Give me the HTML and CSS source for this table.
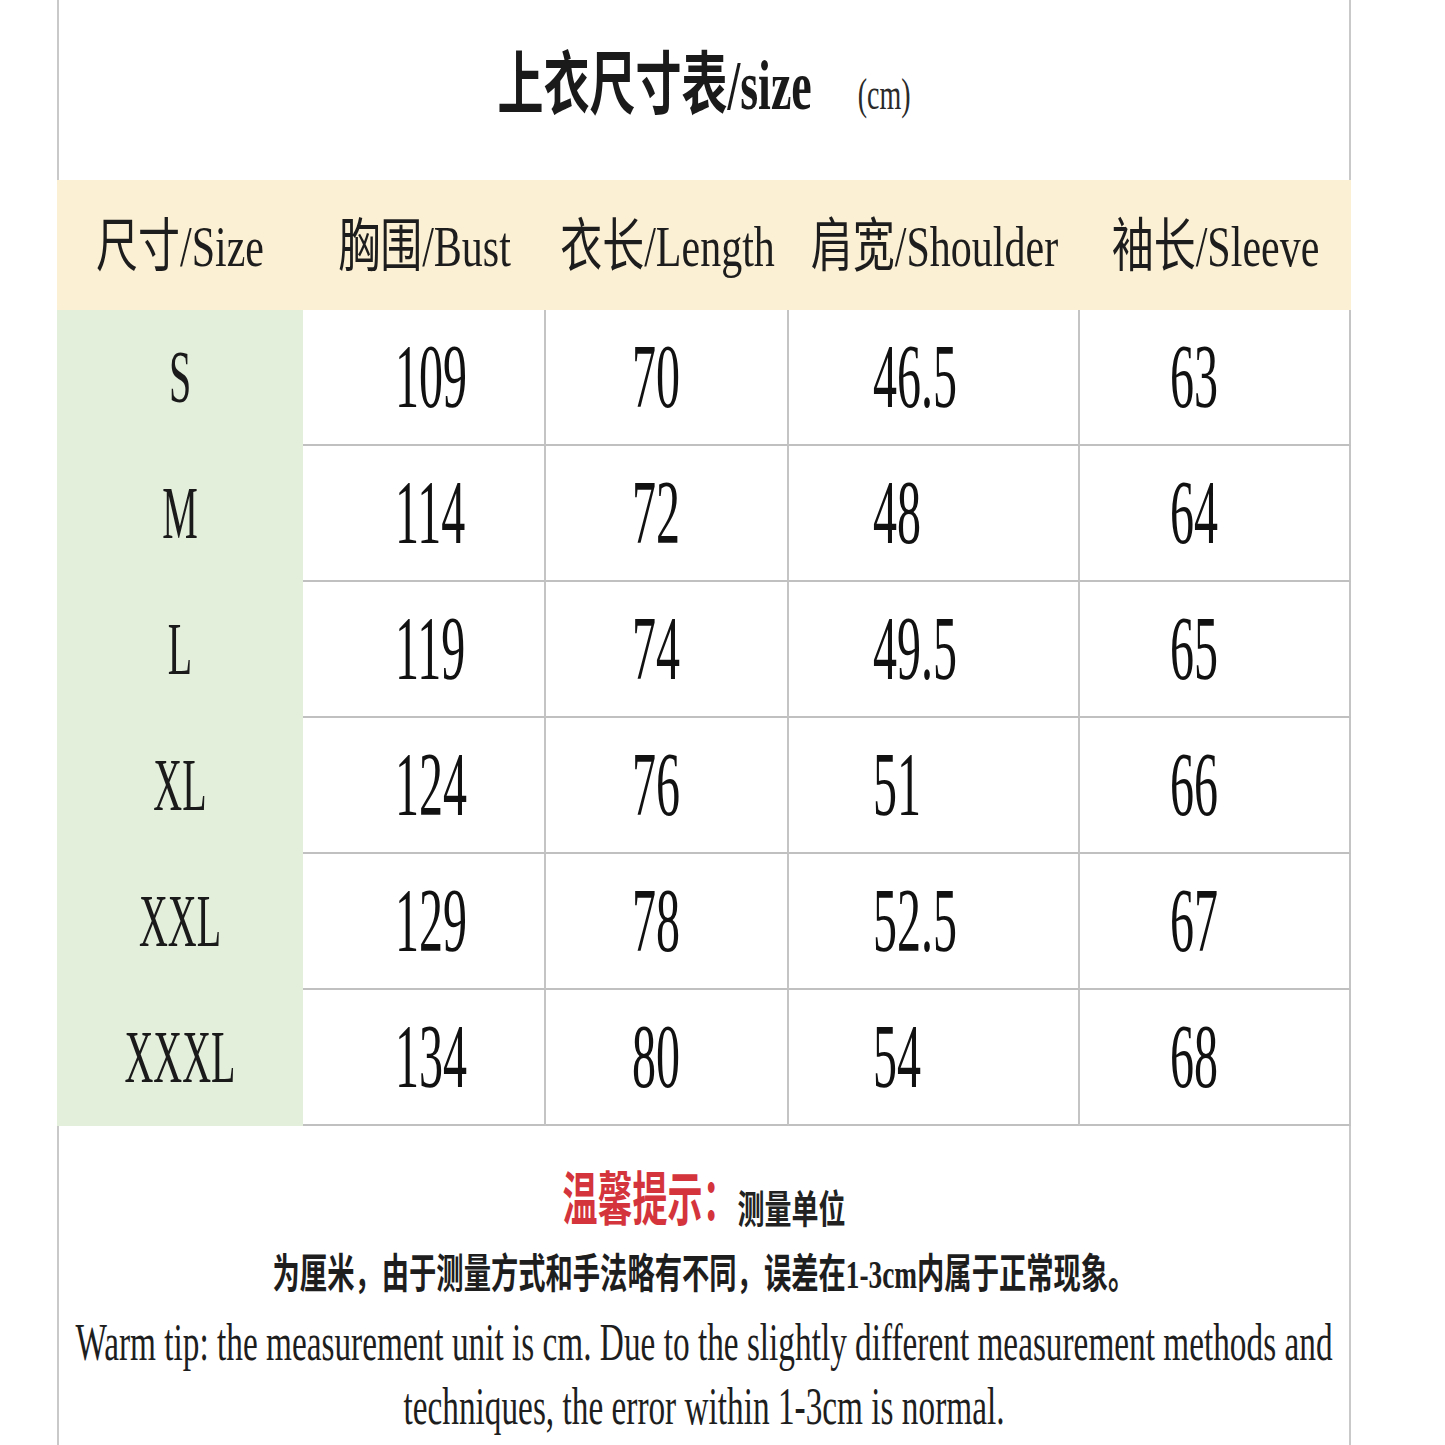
FILE: index.html
```html
<!DOCTYPE html>
<html lang="zh-CN">
<head>
<meta charset="utf-8">
<title>上衣尺寸表</title>
<link rel="stylesheet" href="styles.css">
</head>
<body>
<div class="page">
  <header class="title-box">
    <h1 class="t-main">上衣尺寸表/size</h1>
    <span class="t-unit">(cm)</span>
  </header>

  <div class="chart">
    <div class="hcell"><span>尺寸/Size</span></div>
    <div class="hcell"><span>胸围/Bust</span></div>
    <div class="hcell"><span>衣长/Length</span></div>
    <div class="hcell"><span>肩宽/Shoulder</span></div>
    <div class="hcell"><span>袖长/Sleeve</span></div>

    <div class="size"><span>S</span></div>
    <div class="val c2"><span>109</span></div>
    <div class="val c3"><span>70</span></div>
    <div class="val c4"><span>46.5</span></div>
    <div class="val c5"><span>63</span></div>

    <div class="size"><span>M</span></div>
    <div class="val c2"><span>114</span></div>
    <div class="val c3"><span>72</span></div>
    <div class="val c4"><span>48</span></div>
    <div class="val c5"><span>64</span></div>

    <div class="size"><span>L</span></div>
    <div class="val c2"><span>119</span></div>
    <div class="val c3"><span>74</span></div>
    <div class="val c4"><span>49.5</span></div>
    <div class="val c5"><span>65</span></div>

    <div class="size"><span>XL</span></div>
    <div class="val c2"><span>124</span></div>
    <div class="val c3"><span>76</span></div>
    <div class="val c4"><span>51</span></div>
    <div class="val c5"><span>66</span></div>

    <div class="size"><span>XXL</span></div>
    <div class="val c2"><span>129</span></div>
    <div class="val c3"><span>78</span></div>
    <div class="val c4"><span>52.5</span></div>
    <div class="val c5"><span>67</span></div>

    <div class="size"><span>XXXL</span></div>
    <div class="val c2"><span>134</span></div>
    <div class="val c3"><span>80</span></div>
    <div class="val c4"><span>54</span></div>
    <div class="val c5"><span>68</span></div>
  </div>

  <footer class="notes">
    <div class="tip-head">
      <span class="tip-label">温馨提示：</span><span class="tip-unit">测量单位</span>
    </div>
    <p class="tip-cn">为厘米，由于测量方式和手法略有不同，误差在1-3cm内属于正常现象。</p>
    <p class="tip-en first">Warm tip: the measurement unit is cm. Due to the slightly different measurement methods and</p>
    <p class="tip-en second">techniques, the error within 1-3cm is normal.</p>
  </footer>
</div>
</body>
</html>
```

FILE: styles.css
```css
* {
  box-sizing: border-box;
  margin: 0;
  padding: 0;
}

html,
body {
  background: #ffffff;
}

body {
  width: 1445px;
  height: 1445px;
  overflow: hidden;
  font-family: "Liberation Serif", "Noto Sans CJK SC", serif;
  color: #161616;
}

.page {
  margin-left: 57px;
  width: 1294px;
}

/* ---------- title ---------- */
.title-box {
  height: 180px;
  border-left: 2px solid #c9c9c9;
  border-right: 2px solid #c9c9c9;
  display: flex;
  justify-content: center;
  align-items: flex-start;
  gap: 46px;
  padding-top: 63px;
}

.t-main {
  display: inline-block;
  font-size: 46px;
  font-weight: 700;
  line-height: 1;
  white-space: nowrap;
  color: #1a1a1a;
  transform: scaleY(1.5);
}

.t-unit {
  display: inline-block;
  font-size: 28px;
  line-height: 1;
  margin-top: 18px;
  white-space: nowrap;
  color: #2a2a2a;
  transform: scaleY(1.6);
}

/* ---------- chart ---------- */
.chart {
  display: grid;
  grid-template-columns: 246px 243px 243px 291px 271px;
  grid-template-rows: 130px repeat(6, 136px);
}

.hcell {
  background: #fcf0d4;
  display: flex;
  align-items: center;
  justify-content: center;
  padding-top: 4px;
}

.hcell span {
  display: inline-block;
  font-size: 42px;
  line-height: 1;
  white-space: nowrap;
  color: #1d1d1d;
  transform: scaleY(1.38);
}

.size {
  background: #e3eedb;
  display: flex;
  align-items: center;
  justify-content: center;
}

.size span {
  display: inline-block;
  font-size: 40px;
  line-height: 1;
  color: #1a1a1a;
  transform: scaleY(1.85);
}

.val {
  background: #ffffff;
  border-right: 2px solid #c4c4c4;
  border-bottom: 2px solid #c0c0c0;
  display: flex;
  align-items: center;
}

.val span {
  display: inline-block;
  font-size: 48px;
  line-height: 1;
  color: #111111;
  transform: scaleY(1.9);
}

.c2 { padding-left: 92px; }
.c3 { padding-left: 86px; }
.c4 { padding-left: 84px; }
.c5 { padding-left: 90px; }

/* ---------- notes ---------- */
.notes {
  height: 319px;
  border-left: 2px solid #c9c9c9;
  border-right: 2px solid #c9c9c9;
  display: flex;
  flex-direction: column;
  align-items: center;
  padding-top: 69px;
}

.tip-head {
  display: flex;
  align-items: flex-end;
  height: 35px;
}

.tip-label {
  display: inline-block;
  font-size: 35px;
  font-weight: 700;
  line-height: 1;
  color: #d4343b;
  transform-origin: 50% 100%;
  transform: scaleY(1.65);
}

.tip-unit {
  display: inline-block;
  font-size: 27px;
  font-weight: 700;
  line-height: 1;
  color: #222222;
  transform-origin: 50% 100%;
  transform: scaleY(1.45);
}

.tip-cn {
  margin-top: 32px;
  font-size: 27.3px;
  font-weight: 700;
  line-height: 1;
  white-space: nowrap;
  color: #1e1e1e;
  transform: scaleY(1.5);
}

.tip-en {
  font-size: 33.3px;
  line-height: 1;
  white-space: nowrap;
  color: #1e1e1e;
  transform: scaleY(1.6);
}

.tip-en.first {
  margin-top: 36px;
}

.tip-en.second {
  margin-top: 30px;
}
```
